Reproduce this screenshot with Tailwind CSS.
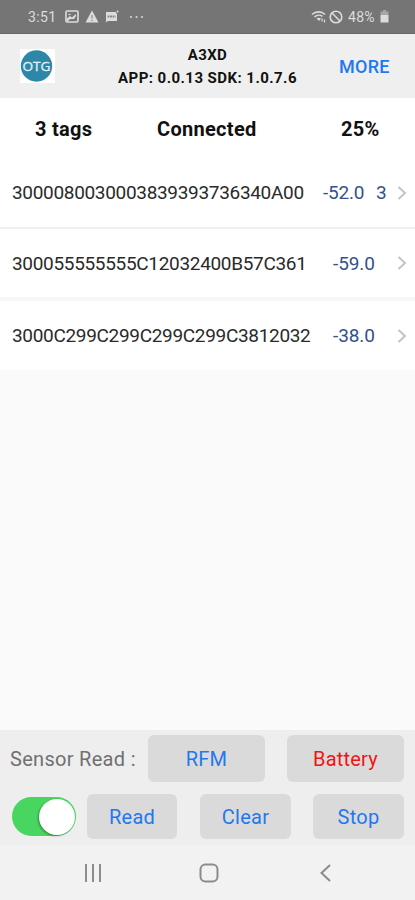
<!DOCTYPE html>
<html lang="en">
<head>
  <meta charset="UTF-8">
  <title>A3XD</title>
  <meta name="viewport" content="width=device-width, initial-scale=1.0">
  <script src="https://cdn.jsdelivr.net/npm/@tailwindcss/browser@4"></script>
</head>
<body class="bg-[#fafafa] font-[Roboto,sans-serif] text-[#111]">
  <div class="flex h-[900px] w-[415px] flex-col overflow-hidden whitespace-nowrap">

    <!-- Status bar -->
    <div class="flex h-[34px] shrink-0 items-center border-b border-[#686868] bg-[#757575] pl-7 pr-[26px] text-[14px] text-[#dcdcdc]">
      <span class="w-[37px] pt-px tracking-[0.4px]">3:51</span>
      <svg class="h-[13px] w-[14px]" viewBox="0 0 14 13" fill="none" stroke="#dcdcdc" stroke-width="1.6">
        <rect x="1" y="1" width="12" height="11" rx="1"/>
        <path d="M2 11V8.500l3-2.500 2 1.500 4-3.500V6L9 9H5l-2 2z" fill="#dcdcdc" stroke="none"/>
        <path d="M3.500 4.500h2" stroke-width="1.2"/>
      </svg>
      <svg class="ml-[6px] h-[13px] w-[14px]" viewBox="0 0 14 13">
        <path d="M7 .5L13.500 12.500H.5z" fill="#dcdcdc"/>
        <path d="M7 5v3.500M7 9.800v1.200" stroke="#858585" stroke-width="1.2"/>
      </svg>
      <svg class="ml-[6px] h-[13px] w-[14px]" viewBox="0 0 14 13">
        <path d="M1 2h10v1.500h1V11H3l-2.500 1.500L1 11z" fill="#dcdcdc"/>
        <path d="M2.500 6.500h8" stroke="#8a8a8a" stroke-width="2" stroke-dasharray="2 .5"/>
        <circle cx="12.500" cy="1.500" r="1" fill="#dcdcdc"/>
      </svg>
      <svg class="ml-[10px] h-[4px] w-[15px]" viewBox="0 0 15 4" fill="#dcdcdc">
        <circle cx="2" cy="2" r="1"/><circle cx="7.500" cy="2" r="1"/><circle cx="13" cy="2" r="1"/>
      </svg>
      <svg class="ml-auto h-[14px] w-[16px]" viewBox="0 0 16 14" fill="none" stroke="#dcdcdc" stroke-width="1.6">
        <path d="M1 4.500C5 1 10.500 1 14 4.500M3.500 7C6 4.800 9.500 4.800 11.500 6.500"/>
        <path d="M5.500 8.500C7 7.500 8.500 7.500 10 8.500L8 11z" fill="#dcdcdc" stroke="none"/>
        <path d="M11 8.500v3M13.500 9.500v3" stroke-width="1.2"/>
      </svg>
      <svg class="ml-[2px] h-[14px] w-[14px]" viewBox="0 0 14 14" fill="none" stroke="#dcdcdc" stroke-width="1.6">
        <circle cx="7" cy="7" r="5.8"/><path d="M3 3l8 8"/>
      </svg>
      <span class="ml-[5px] w-[30px] pt-px tracking-[0.3px]">48%</span>
      <svg class="ml-[2px] h-[13px] w-[9px]" viewBox="0 0 9 13">
        <path d="M3 0h3v1.500h2.500V5h-8V1.500H3z" fill="#a6a6a6"/>
        <path d="M.5 5h8v7.500h-8z" fill="#dcdcdc"/>
      </svg>
    </div>

    <!-- Header -->
    <header class="grid h-16 shrink-0 grid-cols-[92px_1fr_92px] items-center bg-[#efefef]">
      <div class="ml-5 flex h-[34px] w-[35px] items-center bg-white">
        <svg class="h-[34px] w-[34px]" viewBox="0 0 34 34">
          <circle cx="16.5" cy="17" r="15.700" fill="#2c87a9"/>
          <text x="16.5" y="21.5" text-anchor="middle" font-family="Open Sans, sans-serif" font-size="12.5" textLength="28" lengthAdjust="spacingAndGlyphs" fill="#e3f2f6" stroke="#e3f2f6" stroke-width="0.3">OTG</text>
        </svg>
      </div>
      <div class="pt-px text-center text-[15px] leading-[23px] font-bold">
        <div class="tracking-[0.4px]">A3XD</div>
        <div class="tracking-[0.45px]">APP: 0.0.13 SDK: 1.0.7.6</div>
      </div>
      <div class="pl-4 text-[18px] font-medium tracking-[0.3px] text-[#1f78f0]">MORE</div>
    </header>

    <!-- Connection summary -->
    <div class="flex h-[60px] shrink-0 items-center bg-white pl-[35px] pt-px text-[20px] font-bold tracking-[0.3px]">
      <span class="w-[122px]">3 tags</span>
      <span class="w-[184px]">Connected</span>
      <span>25%</span>
    </div>

    <!-- Tag list -->
    <ul class="shrink-0 text-[19px] text-[#2a2a2a]">
      <li class="flex h-[71px] items-center border-b-2 border-[#f0f0f0] bg-white pl-3">
        <span class="w-[311px] pt-0.5 tracking-[-0.32px]">3000080030003839393736340A00</span>
        <span class="w-[53px] pt-0.5 tracking-[-0.2px] text-[#33518f]">-52.0</span>
        <span class="w-[21px] pt-0.5 text-[#33518f]">3</span>
        <svg class="h-4 w-[10px]" viewBox="0 0 10 16" fill="none" stroke="#c4c4c4" stroke-width="2"><path d="M1.500 2l6.500 6-6.500 6"/></svg>
      </li>
      <li class="flex h-[72px] items-center border-b-4 border-[#f7f7f7] bg-white pl-3">
        <span class="w-[321px] pt-0.5 tracking-[-0.32px]">300055555555C12032400B57C361</span>
        <span class="w-[64px] pt-0.5 tracking-[-0.1px] text-[#33518f]">-59.0</span>
        <svg class="h-4 w-[10px]" viewBox="0 0 10 16" fill="none" stroke="#c4c4c4" stroke-width="2"><path d="M1.500 2l6.500 6-6.500 6"/></svg>
      </li>
      <li class="flex h-[69px] items-center bg-white pl-3">
        <span class="w-[321px] pt-0.5 tracking-[-0.32px]">3000C299C299C299C299C3812032</span>
        <span class="w-[64px] pt-0.5 tracking-[-0.1px] text-[#33518f]">-38.0</span>
        <svg class="h-4 w-[10px]" viewBox="0 0 10 16" fill="none" stroke="#c4c4c4" stroke-width="2"><path d="M1.500 2l6.500 6-6.500 6"/></svg>
      </li>
    </ul>

    <!-- Controls -->
    <footer class="mt-auto h-[115px] shrink-0 bg-[#eeeeee] pt-[5px] pl-[10px] text-[20px]">
      <div class="flex h-[47px] items-center">
        <span class="w-[138px] pt-px tracking-[0.3px] text-[#707070]">Sensor Read :</span>
        <button class="h-[47px] w-[117px] rounded-md bg-[#dadada] pt-px tracking-[0.2px] text-[#1f78f0]">RFM</button>
        <button class="ml-[22px] h-[47px] w-[117px] rounded-md bg-[#dadada] pt-px tracking-[0.2px] text-[#f01414]">Battery</button>
      </div>
      <div class="mt-3 flex h-[45px] items-center">
        <div class="ml-0.5 flex h-[39px] w-[64px] items-center justify-end rounded-full bg-[#48d560] pr-px">
          <div class="h-[36px] w-[36px] rounded-full bg-white shadow-[-1px_1px_2px_rgba(0,0,0,0.35)]"></div>
        </div>
        <button class="ml-[11px] h-[45px] w-[90px] rounded-md bg-[#dadada] pt-px tracking-[0.2px] text-[#1f78f0]">Read</button>
        <button class="ml-[23px] h-[45px] w-[91px] rounded-md bg-[#dadada] pt-px tracking-[0.3px] text-[#1f78f0]">Clear</button>
        <button class="ml-[22px] h-[45px] w-[91px] rounded-md bg-[#dadada] pt-px tracking-[0.3px] text-[#1f78f0]">Stop</button>
      </div>
    </footer>

    <!-- Navigation bar -->
    <nav class="flex h-[55px] shrink-0 items-center bg-[#f2f2f2] pl-[84px]">
      <svg class="h-[18px] w-[18px]" viewBox="0 0 18 18" stroke="#8c8c8c" stroke-width="2"><path d="M2 0v18M9 0v18M16 0v18"/></svg>
      <svg class="ml-[97px] h-5 w-5" viewBox="0 0 20 20" fill="none" stroke="#8c8c8c" stroke-width="2"><rect x="1.5" y="1.5" width="17" height="17" rx="5"/></svg>
      <svg class="ml-[101px] h-[18px] w-[12px]" viewBox="0 0 12 18" fill="none" stroke="#8c8c8c" stroke-width="2"><path d="M10 1L1.500 9l8.500 8"/></svg>
    </nav>
  </div>
</body>
</html>
